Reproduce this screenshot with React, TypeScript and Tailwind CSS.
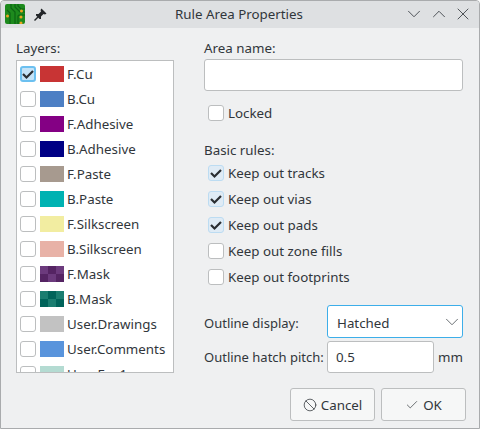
import { Ban, Check, ChevronDown, ChevronUp, X } from "lucide-react";

const layers = [
  { name: "F.Cu", color: "#c83434", checked: true },
  { name: "B.Cu", color: "#4d7fc4" },
  { name: "F.Adhesive", color: "#840084" },
  { name: "B.Adhesive", color: "#000084" },
  { name: "F.Paste", color: "#a79a8f" },
  { name: "B.Paste", color: "#00b2b2" },
  { name: "F.Silkscreen", color: "#f2eda1" },
  { name: "B.Silkscreen", color: "#e8b2a7" },
  { name: "F.Mask", color: "", tiles: ["#6c3a7d", "#552463"] },
  { name: "B.Mask", color: "", tiles: ["#1a7d70", "#00635a"] },
  { name: "User.Drawings", color: "#c2c2c2" },
  { name: "User.Comments", color: "#5994dc" },
  { name: "User.Eco1", color: "#b4dbd2" },
];

const rules = [
  { label: "Keep out tracks", checked: true },
  { label: "Keep out vias", checked: true },
  { label: "Keep out pads", checked: true },
  { label: "Keep out zone fills", checked: false },
  { label: "Keep out footprints", checked: false },
];

function Box({ checked, focus }: { checked?: boolean; focus?: boolean }) {
  const tone = focus
    ? "border-2 border-[#6cc0f0] bg-[#c5e3f7]"
    : checked
      ? "border border-[#bcdcf2] bg-[#dfebf5]"
      : "border border-[#bcbebf] bg-white";
  return (
    <span className={`flex h-4 w-4 shrink-0 items-center justify-center rounded-[3px] ${tone}`}>
      {checked && (
        <svg width="12" height="12" viewBox="0 0 12 12" fill="none" className="shrink-0">
          <path d="M1 6 4.5 9.5 11 3" stroke="#2a2e32" strokeWidth="2.2" />
        </svg>
      )}
    </span>
  );
}

function Swatch({ color, tiles }: { color: string; tiles?: string[] }) {
  if (tiles) {
    return (
      <span className="grid h-4 w-6 shrink-0 grid-cols-3 grid-rows-2">
        {[0, 1, 0, 1, 0, 1].map((t, i) => (
          <span key={i} style={{ background: tiles[t] }} />
        ))}
      </span>
    );
  }
  return <span className="h-4 w-6 shrink-0" style={{ background: color }} />;
}

function Logo() {
  return (
    <svg width="20" height="20" viewBox="0 0 20 20" className="shrink-0">
      <rect width="20" height="20" rx="2" fill="#1d8a1d" />
      <path
        d="M6 0v4l4 4v12M10 0v3l5 5h5M13 0v2l3 3h4M2 6l3 3v11M13 20v-8l1-1h6"
        fill="none"
        stroke="#0d6413"
        strokeWidth="1.2"
      />
      <circle cx="2.5" cy="12" r="1.5" fill="#eda321" />
      <circle cx="16.5" cy="7" r="1.5" fill="#eda321" />
      <circle cx="16" cy="13" r="1.5" fill="#eda321" />
      <circle cx="16" cy="19" r="1.5" fill="#eda321" />
    </svg>
  );
}

function PinIcon() {
  return (
    <svg width="13" height="13" viewBox="0 0 13 13" className="shrink-0">
      <path d="M7.5 0.5 12.5 5.5 11 6.5 9.5 6 7 8.5 7 11 5.5 11 2 7.5 2 6 4.5 6 7 3.5 6.5 2Z" fill="#232629" />
      <path d="M4 9 0.5 12.5" stroke="#232629" strokeWidth="1.4" />
    </svg>
  );
}

export default function App() {
  return (
    <div className="flex h-[429px] w-[480px] flex-col overflow-hidden rounded-t-[4px] border border-[#a9abad] bg-[#eff0f1] font-['Noto_Sans',sans-serif] text-[13.33px] leading-[18px] text-[#31363b]">
      <div className="flex h-[27px] shrink-0 items-center bg-[#dee0e2] pb-px pl-1 pr-[6px]">
        <div className="flex flex-1 items-center gap-[9px]">
          <Logo />
          <PinIcon />
        </div>
        <span>Rule Area Properties</span>
        <div className="flex flex-1 items-center justify-end gap-[3px] text-[#31363b]">
          <ChevronDown size={22} strokeWidth={0.9} />
          <ChevronUp size={22} strokeWidth={0.9} />
          <X size={20} strokeWidth={1} />
        </div>
      </div>

      <div className="flex flex-1 pl-[15px] pt-[11px]">
        <div className="flex w-[158px] shrink-0 flex-col">
          <div className="mb-[3px] h-[18px]">Layers:</div>
          <div className="h-[313px] overflow-hidden border border-[#bcbebf] bg-white">
            {layers.map((l, i) => (
              <div key={l.name} className="flex h-[25px] items-center gap-1 pl-[3px]">
                <Box checked={l.checked} focus={i === 0} />
                <Swatch color={l.color} tiles={l.tiles} />
                <span className="-ml-px whitespace-nowrap">{l.name}</span>
              </div>
            ))}
          </div>
        </div>

        <div className="ml-[30px] flex w-[262px] flex-col">
          <div className="mb-[2px] h-[18px]">Area name:</div>
          <div className="h-8 w-[259px] rounded-[3px] border border-[#bcbebf] bg-white" />

          <label className="mt-[13px] flex h-[18px] items-center gap-1 pl-1">
            <Box />
            <span>Locked</span>
          </label>

          <div className="mt-[19px] h-[18px]">Basic rules:</div>
          <div className="mt-[5px] flex flex-col gap-2 pl-1">
            {rules.map((r) => (
              <label key={r.label} className="flex h-[18px] items-center gap-1">
                <Box checked={r.checked} />
                <span>{r.label}</span>
              </label>
            ))}
          </div>

          <div className="mt-[19px] flex items-center">
            <span className="w-[123px] pt-[2px] text-[13px]">Outline display:</span>
            <div className="flex h-[33px] w-[136px] items-center justify-between rounded-[3px] border border-[#3daee9] bg-white pl-[9px]">
              <span className="pt-[2px]">Hatched</span>
              <ChevronDown size={22} strokeWidth={0.9} className="-mr-px text-[#4d5257]" />
            </div>
          </div>
          <div className="mt-[3px] flex items-center">
            <span className="w-[123px] text-[13px]">Outline hatch pitch:</span>
            <div className="flex h-8 w-[107px] items-center rounded-[3px] border border-[#bcbebf] bg-white pl-[8px]">
              0.5
            </div>
            <span className="ml-1">mm</span>
          </div>

          <div className="mt-[15px] ml-[86px] flex gap-[6px]">
            <button className="flex h-[33px] w-[85px] items-center justify-center gap-1 rounded-[3px] border border-[#bcbebf] bg-[#f6f7f7]">
              <Ban size={14} strokeWidth={1.3} />
              Cancel
            </button>
            <button className="flex h-[33px] w-[85px] items-center justify-center gap-1 rounded-[3px] border border-[#bcbebf] bg-[#f6f7f7]">
              <Check size={14} strokeWidth={1.2} />
              OK
            </button>
          </div>
        </div>
      </div>
    </div>
  );
}
